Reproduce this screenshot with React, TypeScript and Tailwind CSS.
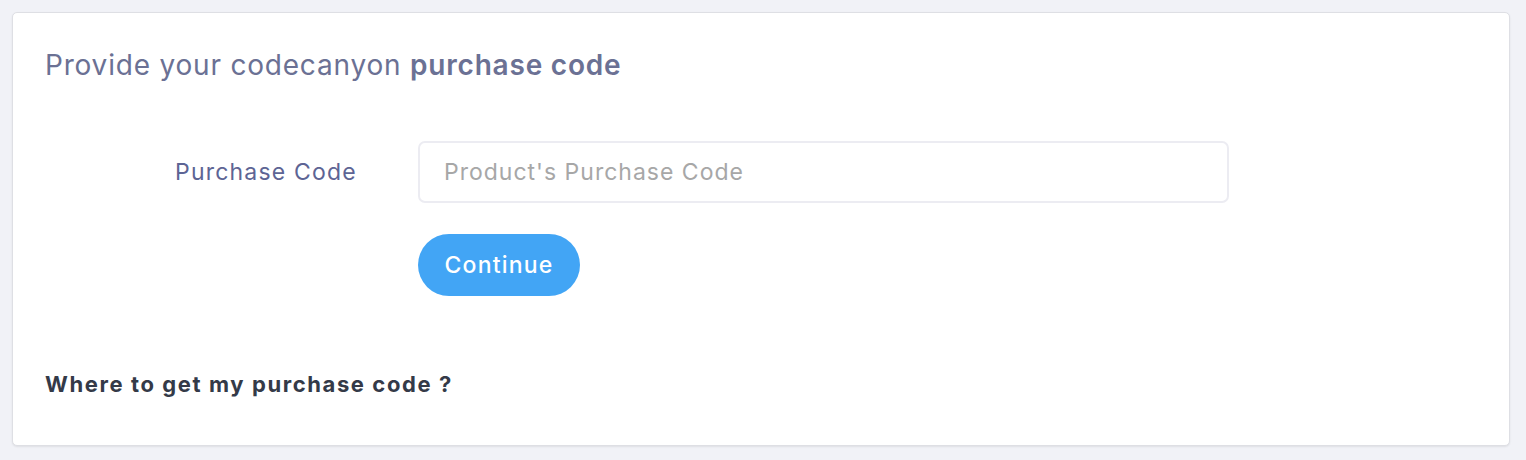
export default function App() {
  return (
    <div
      className="min-h-[460px] bg-[#f1f2f7] pl-3 pr-4 pt-3"
      style={{ fontFamily: "Inter, 'Noto Sans', sans-serif" }}
    >
      <div className="h-[434px] rounded-[5px] border border-[#dedfe4] bg-white px-8 pt-[34px] shadow-[0_1px_2px_rgba(0,0,0,0.08)]">
        <h2 className="text-[28px] leading-[36px] tracking-[0.8px] text-[#6b7194]">
          Provide your codecanyon <span className="font-semibold">purchase code</span>
        </h2>

        <div className="mt-[58px] flex items-center">
          <label className="w-[373px] pl-[130px] text-[23px] tracking-[1.2px] text-[#5d6494]">
            Purchase Code
          </label>
          <input
            type="text"
            placeholder="Product's Purchase Code"
            className="h-[62px] w-[811px] rounded-[7px] border-2 border-[#ececf2] px-6 text-[23px] tracking-[1px] text-gray-700 outline-none placeholder:text-[#a7a7a7]"
          />
        </div>

        <div className="mt-[31px] pl-[373px]">
          <button className="h-[62px] w-[162px] rounded-full bg-[#42a5f5] text-[23px] font-medium tracking-[1.2px] text-white">
            Continue
          </button>
        </div>

        <h3 className="mt-[74px] text-[22px] leading-[28px] font-bold tracking-[1.6px] text-[#343a48]">
          Where to get my purchase code ?
        </h3>
      </div>
    </div>
  );
}
